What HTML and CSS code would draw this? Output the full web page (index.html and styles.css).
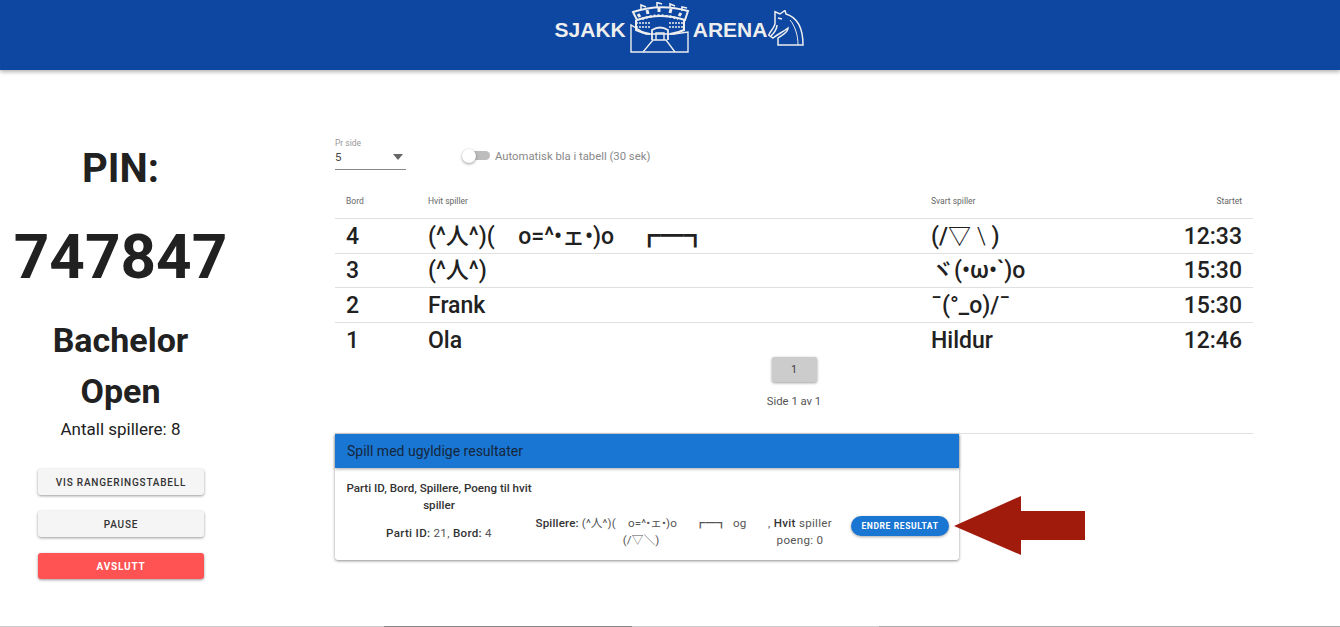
FILE: index.html
```html
<!DOCTYPE html>
<html lang="no">
<head>
    <meta charset="UTF-8">
    <meta name="viewport" content="width=device-width, initial-scale=1.0">
    <title>Sjakkarena</title>
    <link rel="stylesheet" href="styles.css">
</head>
<body>
    <header class="topbar">
        <div class="logo">
            <span class="logo-text">SJAKK</span>
            <svg class="logo-arena" width="60" height="52" viewBox="0 0 60 52" fill="none" stroke="#eee" stroke-width="1.3">
                <path d="M1 23 L1 50 L58 50 L58 30 L44 32 L16 32 Z" stroke-width="1.4"/>
                <path d="M13 50 L23 38 H36 L45 50"/>
                <path d="M22 38 L22 28 Q30 23 38 28 L38 38" stroke-width="1.8"/>
                <path d="M26 38 L26 31 L34 31 L34 38" stroke-width="1.4"/>
                <path d="M3 10 Q30 1 58 9 L55 18 Q30 10 7 18 Z" stroke-width="2"/>
                <path d="M6 18 L6 28 Q12 31 20 32 M54 18 L54 28 Q48 31 40 32" stroke-width="2"/>
                <path d="M6 21 H21 M6 25 H21 M39 21 H54 M39 25 H54" stroke-width="1.6" stroke-dasharray="2 1"/>
                <path d="M12 17 Q30 10 48 17" stroke-width="2.4" stroke-dasharray="2 2"/>
                <path d="M8 12 L10 15 M17 8 L18 12 M29 6 L29 10 M41 7 L40 11 M51 11 L49 14" stroke-width="3"/>
                <path d="M11 8 V3 L16 5 M27 5 V0.5 L32 2 M40 6 V2 L45 4 M52 9 V5 L57 6" stroke-width="1.6"/>
            </svg>
            <span class="logo-text">ARENA</span>
            <svg class="logo-knight" width="36" height="36" viewBox="0 0 36 36" fill="none" stroke="#eee" stroke-width="1.5">
                <path d="M7 1.7 L12 4 L17 0.5 L18 4 C28 7 35 16 35 35 L10 35 L10 28 C14 25 20 23 20 18 C15 22 10 24 5 28 L0.7 25 C3 20 7 17 7 13 Z"/>
                <path d="M10 8 L14 9 M3 26 C6 23 9 19 9 15"/>
                <path d="M22 10 C27 16 30 25 30 35" stroke-width="1"/>
            </svg>
        </div>
    </header>

    <main class="content">
        <aside class="sidebar">
            <h1 class="pin-label">PIN:</h1>
            <div class="pin-code">747847</div>
            <h2 class="tournament">Bachelor<br>Open</h2>
            <p class="players">Antall spillere: 8</p>
            <button class="btn">Vis rangeringstabell</button>
            <button class="btn">Pause</button>
            <button class="btn btn-red">Avslutt</button>
        </aside>

        <section class="games">
            <div class="controls">
                <div class="per-page">
                    <label>Pr side</label>
                    <div class="select-box"><span>5</span><i class="caret"></i></div>
                </div>
                <div class="switch"><i class="track"></i><i class="thumb"></i></div>
                <span class="switch-label">Automatisk bla i tabell (30 sek)</span>
            </div>

            <table class="game-table">
                <thead>
                    <tr>
                        <th class="col-table">Bord</th>
                        <th class="col-white">Hvit spiller</th>
                        <th>Svart spiller</th>
                        <th class="col-time">Startet</th>
                    </tr>
                </thead>
                <tbody>
                    <tr><td>4</td><td>(^人^)(&emsp;o=^•ェ•)o&emsp;<span class="box">┏━┓</span></td><td>(/▽ <span class="thin">\</span> )</td><td class="col-time">12:33</td></tr>
                    <tr><td>3</td><td>(^人^)</td><td>ヾ(•ω•`)o</td><td class="col-time">15:30</td></tr>
                    <tr><td>2</td><td>Frank</td><td>¯(°_o)/¯</td><td class="col-time">15:30</td></tr>
                    <tr><td>1</td><td>Ola</td><td>Hildur</td><td class="col-time">12:46</td></tr>
                </tbody>
            </table>

            <div class="pager">
                <button class="page-btn">1</button>
                <p>Side 1 av 1</p>
            </div>

            <div class="invalid-wrap">
                <div class="card">
                    <div class="card-title">Spill med ugyldige resultater</div>
                    <div class="card-body">
                        <div class="card-id">
                            <p><b>Parti ID, Bord, Spillere, Poeng til hvit spiller</b></p>
                            <p class="ids"><b>Parti ID:</b> 21, <b>Bord:</b> 4</p>
                        </div>
                        <p class="card-players"><b>Spillere:</b> (^人^)(&emsp;o=^•ェ•)o&emsp;&ensp;<span class="box-small">┏━┓</span>&ensp;og<br>(/▽＼)</p>
                        <p class="card-score">, <b>Hvit</b> spiller poeng: 0</p>
                        <button class="btn-pill">Endre resultat</button>
                    </div>
                </div>
                <svg class="arrow" width="132" height="60" viewBox="0 0 132 60">
                    <polygon points="0,30 67,0 67,15 131,15 131,44 67,44 67,59" fill="#a01b0c"/>
                </svg>
            </div>
        </section>
    </main>

    <div class="bottom-line"></div>
</body>
</html>
```

FILE: styles.css
```css
html, body { margin: 0; height: 100%; overflow: hidden; }
body { font-family: Roboto, "Noto Sans CJK JP", sans-serif; color: #212121; background: #fff; display: flex; flex-direction: column; }
p { margin: 0; }

.topbar { height: 70px; flex: none; background: #0d47a1; box-shadow: 0 2px 4px rgba(0,0,0,.3); display: flex; justify-content: center; }
.logo { display: flex; align-items: flex-start; margin-left: 19px; }
.logo-text { font-family: "Liberation Sans", Arial, sans-serif; font-weight: 700; font-size: 21px; color: #eee; line-height: 24px; margin-top: 18px; }
.logo-arena { margin: 2px 3px 0 4px; }
.logo-knight { margin: 10px 0 0 1px; }

.content { flex: 1; display: flex; min-height: 0; }
.sidebar { width: 241px; flex: none; text-align: center; padding-top: 73px; }
.pin-label { margin: 0; font-size: 40px; font-weight: 700; line-height: 52px; }
.pin-code { font-size: 62px; font-weight: 700; line-height: 84px; margin-top: 20px; }
.tournament { margin: 16px 0 0; font-size: 34px; font-weight: 700; line-height: 51px; }
.players { font-size: 17px; line-height: 24px; margin-bottom: 28px; }

.btn { display: block; width: 166px; height: 26px; margin: 0 auto 16px 38px; border: 0; border-radius: 3px; background: #f5f5f5; color: #333; font-family: inherit; font-size: 10px; font-weight: 500; letter-spacing: .8px; text-transform: uppercase; box-shadow: 0 1px 3px rgba(0,0,0,.4); }
.btn-red { background: #ff5252; color: #fff; font-weight: 700; }

.games { width: 918px; margin-left: 94px; padding-top: 67px; }
.controls { display: flex; align-items: center; height: 34px; }
.per-page { width: 71px; }
.per-page label { display: block; font-size: 8.5px; line-height: 10px; color: #999; margin-top: -1px; }
.select-box { display: flex; justify-content: space-between; align-items: center; height: 18px; padding: 0 3px 3px 0; border-bottom: 1px solid #888; font-size: 11.5px; color: #444; }
.caret { border: 5.5px solid transparent; border-top: 6px solid #666; border-bottom: 0; }
.switch { position: relative; width: 28px; height: 14px; margin: 4px 0 0 56px; }
.track { position: absolute; left: 6px; top: 2px; width: 22px; height: 9px; border-radius: 5px; background: #bdbdbd; }
.thumb { position: absolute; left: 0; top: 0; width: 14px; height: 14px; border-radius: 50%; background: #fff; box-shadow: 0 1px 3px rgba(0,0,0,.4); }
.switch-label { font-size: 11.3px; color: #888; margin: 4px 0 0 5px; }

.game-table { width: 100%; border-collapse: collapse; margin-top: 14px; table-layout: fixed; }
.game-table th { height: 31px; padding: 0 11px 2px; text-align: left; font-size: 8.5px; font-weight: 400; color: #666; border-bottom: 1px solid #e0e0e0; }
.game-table td { height: 31.6px; padding: 2px 11px 0; font-size: 23px; font-weight: 500; color: #212121; border-bottom: 1px solid #e0e0e0; line-height: 30px; white-space: nowrap; overflow: hidden; }
.game-table tr:last-child td { border-bottom: 0; }
.col-table { width: 60px; }
.col-white { width: 481px; }
.game-table .col-time { text-align: right; width: 130px; }
.thin { font-weight: 300; }

.pager { text-align: center; margin-top: 1px; padding-bottom: 24px; border-bottom: 1px solid #e0e0e0; }
.page-btn { width: 45px; height: 25px; border: 0; border-radius: 2px; background: #ccc; font-family: inherit; font-size: 10px; color: #333; box-shadow: 0 1px 3px rgba(0,0,0,.4); }
.pager p { font-size: 11.3px; color: #555; margin-top: 13px; line-height: 14px; }

.invalid-wrap { position: relative; }
.card { width: 624px; border-radius: 0 0 3px 3px; background: #fff; box-shadow: 0 1px 3px rgba(0,0,0,.45); font-size: 11.6px; line-height: 17px; color: #555; }
.card-title { height: 34px; line-height: 34px; padding-left: 12px; background: #1976d2; color: #16263c; font-size: 14px; box-shadow: 0 1px 3px rgba(0,0,0,.35); }
.card-body { display: flex; align-items: flex-start; height: 92px; text-align: center; }
.card-body b { color: #333; font-weight: 500; }
.card-id { width: 208px; flex: none; margin-top: 12px; }
.card-id .ids { margin-top: 11px; letter-spacing: .3px; }
.card-players { width: 220px; flex: none; margin: 47px 0 0 -12px; white-space: nowrap; letter-spacing: .15px; }
.box-small { font-size: 10.5px; }
.card-score { width: 76px; flex: none; margin: 47px 0 0 11px; letter-spacing: .3px; }
.btn-pill { flex: none; width: 98px; height: 20px; margin: 48px 0 0 13px; padding: 0; border: 0; border-radius: 10px; background: #1976d2; color: #fff; font-family: inherit; font-size: 8.5px; font-weight: 700; letter-spacing: .6px; text-transform: uppercase; box-shadow: 0 1px 3px rgba(0,0,0,.35); }
.arrow { position: absolute; left: 619px; top: 62px; }

.bottom-line { height: 1px; flex: none; background: linear-gradient(90deg, #ccc 0 384px, #888 384px 632px, #ccc 632px 879px, #aaa 879px 100%); }
```
